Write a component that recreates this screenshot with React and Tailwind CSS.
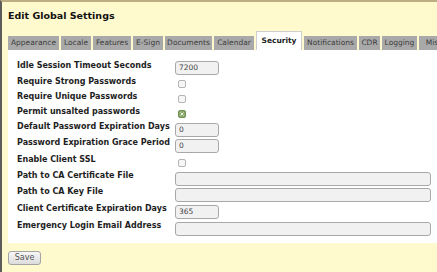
const TABS = [
  { name: 'Appearance', w: 'w-[51px]' },
  { name: 'Locale', w: 'w-[30px]' },
  { name: 'Features', w: 'w-[38px]' },
  { name: 'E-Sign', w: 'w-[30px]' },
  { name: 'Documents', w: 'w-[47px]' },
  { name: 'Calendar', w: 'w-[40px]' },
  { name: 'Security', w: 'w-[46px]', active: true },
  { name: 'Notifications', w: 'w-[53px]' },
  { name: 'CDR', w: 'w-[21px]' },
  { name: 'Logging', w: 'w-[35px]' },
  { name: 'Misc', w: 'w-[30px]' },
];

// h: row height, kind: control type
const ROWS = [
  { label: 'Idle Session Timeout Seconds', kind: 'short', value: '7200', h: 'h-[17px]' },
  { label: 'Require Strong Passwords', kind: 'check', h: 'h-[15px]' },
  { label: 'Require Unique Passwords', kind: 'check', h: 'h-[15px]' },
  { label: 'Permit unsalted passwords', kind: 'checked', h: 'h-[15px]' },
  { label: 'Default Password Expiration Days', kind: 'short', value: '0', h: 'h-[16px]' },
  { label: 'Password Expiration Grace Period', kind: 'short', value: '0', h: 'h-[16px]' },
  { label: 'Enable Client SSL', kind: 'check', h: 'h-[18px]' },
  { label: 'Path to CA Certificate File', kind: 'wide', value: '', h: 'h-[14px]' },
  { label: 'Path to CA Key File', kind: 'wide', value: '', h: 'h-[18px]' },
  { label: 'Client Certificate Expiration Days', kind: 'short', value: '365', h: 'h-[16px]' },
  { label: 'Emergency Login Email Address', kind: 'wide', value: '', h: 'h-[18px]' },
];

function Control({ kind, value }) {
  if (kind === 'check') {
    return (
      <div className="ml-[3px] mt-[3px] w-[8px] h-[8px] rounded-[2px] border border-[#b4b4b4] bg-[#f6f6f6]" />
    );
  }
  if (kind === 'checked') {
    return (
      <div className="ml-[3px] mt-[3px] w-[8px] h-[8px] rounded-[2px] border border-[#6f8f55] bg-[#8aab6c] flex items-center justify-center">
        <svg width="4" height="4" viewBox="0 0 4 4">
          <path d="M0.5 0.5 L3.5 3.5 M3.5 0.5 L0.5 3.5" stroke="#e8f0df" strokeWidth="1" />
        </svg>
      </div>
    );
  }
  const width = kind === 'wide' ? 'w-[256px]' : 'w-[44px]';
  return (
    <div
      className={`${width} mt-[3px] h-[14px] rounded-[3px] border border-[#a8a8a8] bg-[#f1f1f1] flex items-center pl-[3px] text-[7.5px] text-[#444]`}
    >
      {value}
    </div>
  );
}

export default function App() {
  return (
    <div
      className="w-[437px] h-[272px] overflow-hidden bg-[#fffacd] border-l-2 border-t-2 border-l-[#5c5c5c] border-t-[#bcae82] pl-[6px] pt-[8px]"
      style={{ fontFamily: '"DejaVu Sans", Verdana, sans-serif' }}
    >
      <h1 className="h-[12px] leading-[12px] text-[9.5px] font-bold text-[#111]">Edit Global Settings</h1>

      {/* Tabs */}
      <div className="mt-[9px] flex items-end gap-[2px] whitespace-nowrap">
        {TABS.map((t) =>
          t.active ? (
            <div
              key={t.name}
              className={`${t.w} shrink-0 h-[19px] bg-white border border-b-0 border-[#cfcfcf] flex items-center justify-center text-[7.5px] font-bold text-[#222]`}
            >
              {t.name}
            </div>
          ) : (
            <div
              key={t.name}
              className={`${t.w} shrink-0 h-[14px] bg-[#a9a9a9] flex items-center justify-center text-[7.5px] text-[#3c3c3c]`}
            >
              {t.name}
            </div>
          )
        )}
      </div>

      {/* Panel */}
      <div className="w-[460px] bg-white pt-[8px] pb-[7px] pl-[9px]">
        {ROWS.map((r) => (
          <div key={r.label} className={`${r.h} flex items-center`}>
            <div className="w-[158px] shrink-0 pb-[2px] text-[8px] font-bold text-[#1e1e1e] whitespace-nowrap leading-[10px]">
              {r.label}
            </div>
            <Control kind={r.kind} value={r.value} />
          </div>
        ))}
      </div>

      <button className="mt-[8px] w-[33px] h-[14px] rounded-[3px] border border-[#a4a4a4] bg-gradient-to-b from-[#f7f7f7] to-[#dcdcdc] text-[8px] text-[#555] flex items-center justify-center">
        Save
      </button>
    </div>
  );
}
